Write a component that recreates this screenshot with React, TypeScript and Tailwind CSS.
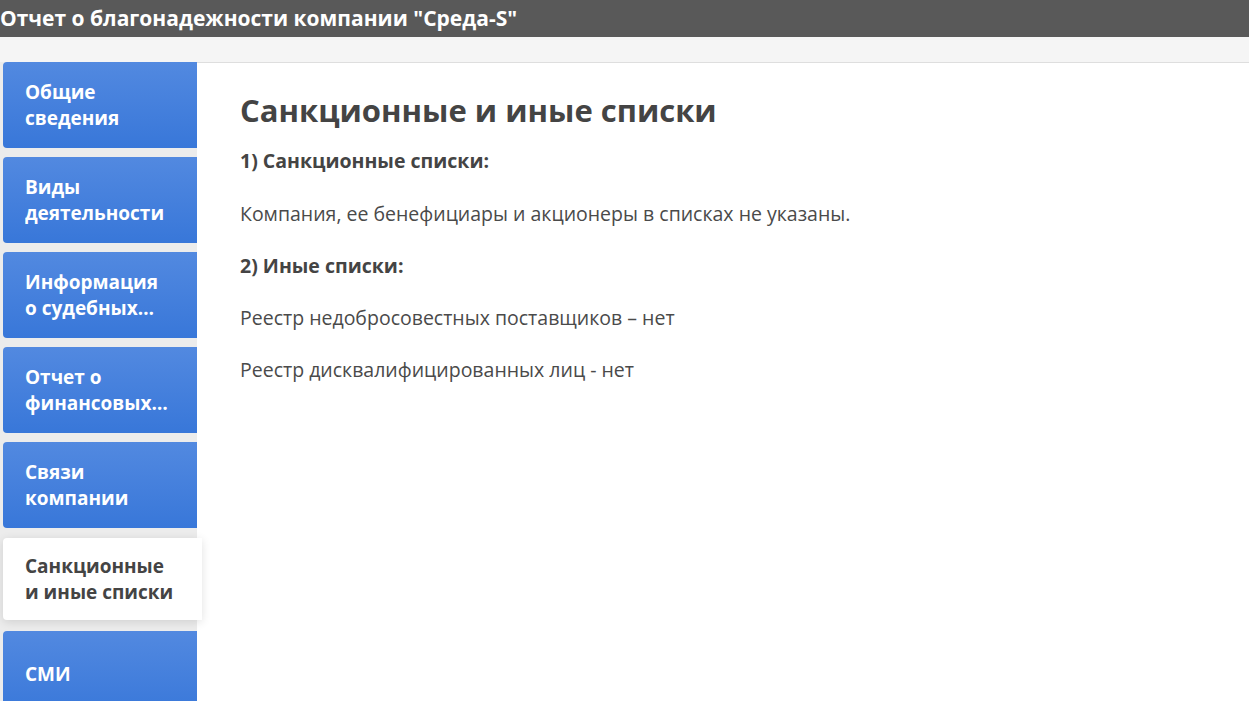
import React from "react";

const tabs = [
  "Общие сведения",
  "Виды деятельности",
  "Информация о судебных делах",
  "Отчет о финансовых показателях",
  "Связи компании",
  "Санкционные и иные списки",
  "СМИ",
];

const ACTIVE = 5;

export default function App() {
  return (
    <div
      className="min-h-screen bg-[#f5f5f5] text-[#444]"
      style={{ fontFamily: '"Open Sans", "Noto Sans", sans-serif' }}
    >
      {/* Header */}
      <header className="flex h-[37px] items-center bg-[#595959]">
        <h1 className="text-[21px] font-bold leading-none text-white">
          Отчет о благонадежности компании "Среда-S"
        </h1>
      </header>

      <div className="h-[25px] bg-[#f5f5f5]" />

      <div className="flex">
        {/* Sidebar */}
        <aside className="flex w-[197px] shrink-0 flex-col bg-[#ececec] pl-[3px]">
          {tabs.map((t, i) =>
            i === ACTIVE ? (
              <div
                key={t}
                className="relative z-10 mb-[11px] mt-[1px] flex h-[82px] w-[199px] items-center rounded-l-[4px] bg-white pl-[22px] pr-[26px] text-[19px] font-bold leading-[26px] text-[#444] shadow-[0_2px_10px_rgba(0,0,0,0.12)]"
              >
                <span className="line-clamp-2">{t}</span>
              </div>
            ) : (
              <div
                key={t}
                className="mb-[9px] flex h-[86px] items-center rounded-l-[4px] bg-gradient-to-b from-[#5289e0] to-[#3877d9] pl-[22px] pr-[24px] text-[19px] font-bold leading-[26px] text-white"
              >
                <span className="line-clamp-2 break-words">{t}</span>
              </div>
            )
          )}
        </aside>

        {/* Content */}
        <main className="min-h-[639px] flex-1 border-t border-[#dedede] bg-white pl-[43px] pt-[25px]">
          <h2 className="text-[31px] font-bold leading-[44px] text-[#444]">
            Санкционные и иные списки
          </h2>
          <p className="mt-[16px] text-[19.5px] font-bold leading-[26px]">
            1) Санкционные списки:
          </p>
          <p className="mt-[27px] text-[19.5px] leading-[26px] text-[#4a4a4a]">
            Компания, ее бенефициары и акционеры в списках не указаны.
          </p>
          <p className="mt-[26px] text-[19.5px] font-bold leading-[26px]">
            2) Иные списки:
          </p>
          <p className="mt-[26px] text-[19.5px] leading-[26px] text-[#4a4a4a]">
            Реестр недобросовестных поставщиков – нет
          </p>
          <p className="mt-[26px] text-[19.5px] leading-[26px] text-[#4a4a4a]">
            Реестр дисквалифицированных лиц - нет
          </p>
        </main>
      </div>
    </div>
  );
}
